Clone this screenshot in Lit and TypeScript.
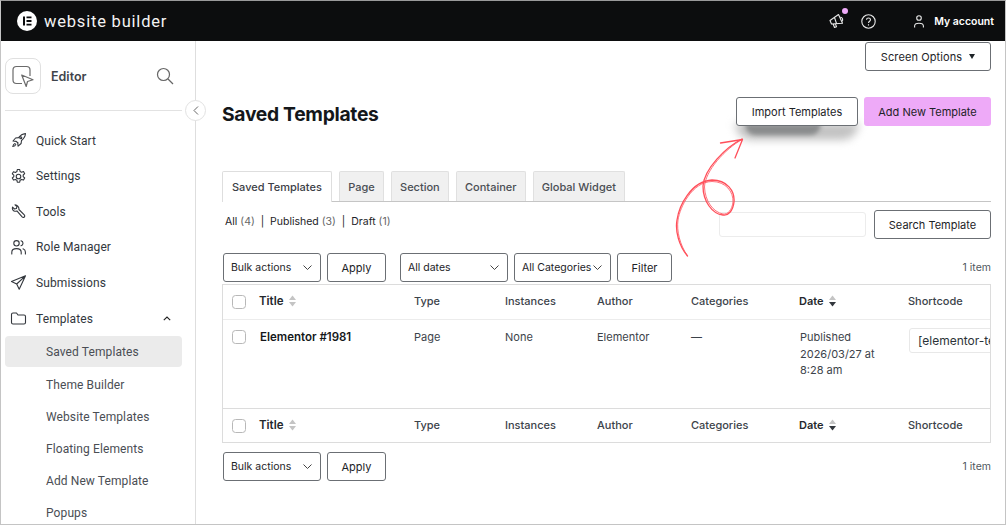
import { LitElement, html, css, svg } from 'lit';
import { customElement } from 'lit/decorators.js';

const navItems = [
  { label: 'Quick Start', icon: svg`<path d="M6.2 9.4 3 9l2.6-3 3-.4C10.500 3 13 1.800 15.500 1.500c-.2 2.600-1.400 5-4 7l-.4 3-3 2.600-.4-3.200zM6.200 9.400l1.900 1.500M5 11.500c-1.300.4-2 1.800-2.200 3 1.300-.2 2.600-.9 3-2.200"/><circle cx="10.800" cy="5.700" r="1"/>` },
  { label: 'Settings', icon: svg`<circle cx="8.500" cy="8.500" r="2.300"/><path d="M7.300 1.500h2.400l.4 2 1.500.8 1.900-.7 1.200 2.100-1.500 1.300v1.700l1.500 1.300-1.200 2.100-1.900-.7-1.500.8-.4 2H7.300l-.4-2-1.500-.8-1.900.7-1.200-2.100 1.500-1.300V7.100L2.300 5.800l1.200-2.100 1.900.7 1.500-.8z"/>` },
  { label: 'Tools', icon: svg`<path d="M5 1.800 7 3.600 6.400 5.500l-1.900.5-2-1.900C2 6 2.800 7.900 4.800 8.200c.9.100 1.500 0 2.100-.3l5.200 6c.7.700 1.600.7 2.200.1.600-.6.600-1.500 0-2.100L8.900 6.500c.4-2.300-1.500-4.700-3.900-4.700z"/>` },
  { label: 'Role Manager', icon: svg`<circle cx="6.500" cy="4.300" r="2.700"/><path d="M1.800 15v-1.800c0-2.200 1.800-3.600 4.700-3.600s4.700 1.400 4.700 3.600V15M11 1.800c1.300.4 2 1.300 2 2.500s-.7 2.100-2 2.500M13 9.800c1.500.5 2.400 1.600 2.400 3.200v2"/>` },
  { label: 'Submissions', icon: svg`<path d="M15.500 1.800 1.500 7.600l5.200 2.400 2.500 5.200zM15.500 1.800 6.700 10"/>` },
];

const subItems = ['Saved Templates', 'Theme Builder', 'Website Templates', 'Floating Elements', 'Add New Template', 'Popups'];
const tabs = ['Saved Templates', 'Page', 'Section', 'Container', 'Global Widget'];
const columns = ['Type', 'Instances', 'Author', 'Categories'];

@customElement('app-root')
export class AppRoot extends LitElement {
  static styles = css`
    :host {
      display: block;
      width: 1006px;
      height: 525px;
      overflow: hidden;
      font-family: Inter, 'Liberation Sans', sans-serif;
      color: #1d2327;
    }
    * { box-sizing: border-box; }
    .frame {
      position: relative;
      width: 1006px;
      height: 525px;
      overflow: hidden;
      display: flex;
      flex-direction: column;
      background: #fff;
      border: 1px solid #c4c4c4;
      border-top: 1px solid #9a9a9a;
    }
    .topbar {
      flex: none;
      height: 40px;
      background: #0c0d0e;
      color: #fff;
      display: flex;
      align-items: center;
      padding: 0 11px 0 16px;
    }
    .logo {
      width: 20px;
      height: 20px;
      flex: none;
    }
    .brand {
      margin-left: 7px;
      font-family: Roboto, sans-serif;
      font-size: 16.500px;
      letter-spacing: 0.8px;
      color: #f3f3f3;
    }
    .spacer { flex: 1; }
    .top-icon {
      position: relative;
      display: flex;
      color: #e8e8e8;
    }
    .dot {
      position: absolute;
      top: -5px;
      right: -3px;
      width: 6px;
      height: 6px;
      border-radius: 50%;
      background: #eeaaf8;
    }
    .help { margin-left: 16px; }
    .account-icon { margin-left: 38.500px; }
    .account {
      margin-left: 10px;
      font-size: 10.500px;
      font-weight: 600;
    }
    .body {
      flex: 1;
      min-height: 0;
      display: flex;
    }
    .side {
      position: relative;
      flex: none;
      width: 195px;
      border-right: 1px solid #dedede;
      padding: 0 13px 0 4px;
      color: #3f444b;
    }
    .editor {
      display: flex;
      align-items: center;
      height: 70px;
      padding-top: 1px;
      border-bottom: 1px solid #e2e2e2;
    }
    .editor-box {
      width: 36px;
      height: 36px;
      border: 1px solid #e0e0e0;
      border-radius: 8px;
      display: flex;
      align-items: center;
      justify-content: center;
    }
    .editor-name {
      margin-left: 10px;
      font-size: 12.500px;
      font-weight: 600;
      flex: 1;
    }
    .editor-search { margin-right: 8px; display: flex; }
    .collapse {
      position: absolute;
      left: 184px;
      top: 59px;
      width: 21px;
      height: 21px;
      border-radius: 50%;
      border: 1px solid #e2e2e2;
      background: #fff;
      display: flex;
      align-items: center;
      justify-content: center;
      z-index: 1;
    }
    .nav { padding-top: 11.800px; }
    .nav-item {
      display: flex;
      align-items: center;
      height: 35.600px;
      font-family: Roboto, sans-serif;
      font-size: 12px;
      letter-spacing: 0.1px;
      color: #33373d;
    }
    .nav-icon {
      width: 17px;
      height: 17px;
      margin: 0 9px 0 5px;
      fill: none;
      stroke: #33373d;
      stroke-width: 1.100;
      stroke-linejoin: round;
      stroke-linecap: round;
    }
    .chev { margin-left: auto; margin-right: 11px; }
    .sub-item {
      display: flex;
      align-items: center;
      height: 32.200px;
      padding-left: 41px;
      font-family: Roboto, sans-serif;
      font-size: 12px;
      letter-spacing: 0.1px;
      color: #4a4e54;
      border-radius: 4px;
    }
    .sub-item.active {
      background: #ebebeb;
      height: 31px;
      margin-bottom: 1.200px;
    }
    .main {
      position: relative;
      flex: 1;
      min-width: 0;
      padding: 0 14px 0 26px;
      font-size: 11px;
    }
    .screen-row {
      display: flex;
      justify-content: flex-end;
      height: 55px;
      padding-top: 1px;
    }
    .btn {
      display: flex;
      align-items: center;
      justify-content: center;
      height: 29px;
      background: #fff;
      border: 1px solid #6b6f74;
      border-radius: 3px;
      font-size: 11px;
      color: #1d2327;
      white-space: nowrap;
    }
    .screen { width: 126px; gap: 7px; letter-spacing: 0.100px; }
    .caret {
      width: 0;
      height: 0;
      border: 3.500px solid transparent;
      border-top: 5px solid #1d2327;
      border-bottom: 0;
    }
    .title-row {
      display: flex;
      align-items: center;
      height: 30px;
      padding-top: 1px;
    }
    h1 {
      margin: 0;
      padding-top: 4px;
      flex: 1;
      font-size: 19.300px;
      font-weight: 700;
      letter-spacing: -0.300px;
      color: #14171a;
    }
    .import {
      position: relative;
      width: 122px;
      margin-right: 6px;
    }
    .import::before {
      content: '';
      position: absolute;
      left: -2px;
      right: -2px;
      top: 25px;
      height: 17px;
      background: #c2c2c2;
      filter: blur(4px);
      border-radius: 0 0 20px 20px;
      z-index: -2;
    }
    .import::after {
      content: '';
      position: absolute;
      left: 8px;
      width: 76px;
      top: 26px;
      height: 11px;
      background: #8a8c8d;
      filter: blur(2px);
      border-radius: 0 0 30px 30px;
      z-index: -1;
    }
    .import-wrap { position: relative; z-index: 0; }
    .add {
      width: 127px;
      border: 0;
      background: #eeaaf8;
    }
    .tabs {
      display: flex;
      gap: 7.300px;
      margin-top: 45px;
      height: 31px;
      border-bottom: 1px solid #c5c5c5;
    }
    .tab {
      display: flex;
      align-items: center;
      justify-content: center;
      padding: 1px 8px 0;
      height: 30px;
      background: #f0f0f0;
      border: 1px solid #e0e0e0;
      border-bottom: 0;
      border-radius: 2px 2px 0 0;
      font-size: 11px;
      font-weight: 500;
      color: #4a4e54;
    }
    .tab.active {
      background: #fff;
      height: 31px;
      padding: 0 9px;
      border-color: #dedede;
      color: #3c4046;
    }
    .tools {
      display: flex;
      align-items: flex-start;
      height: 40px;
    }
    .links {
      flex: 1;
      padding: 13px 0 0 3px;
      font-size: 10.500px;
      white-space: pre;
    }
    .links i { font-style: normal; color: #666; }
    .search-input {
      width: 147px;
      height: 25px;
      margin-top: 10px;
      border: 1px solid #ececec;
      border-radius: 3px;
      margin-right: 8px;
    }
    .search-btn { width: 117px; margin-top: 8px; }
    .filters {
      display: flex;
      align-items: center;
      margin-top: 11px;
      padding-left: 1px;
      height: 29px;
      gap: 6px;
    }
    .filters.bottom { margin-top: 9px; }
    .select {
      justify-content: space-between;
      padding: 0 7px;
      font-size: 10.500px;
      border-radius: 3px;
    }
    .select span { margin-top: -1px; }
    .count {
      margin-left: auto;
      font-size: 10.500px;
      color: #50575e;
    }
    .table {
      margin-top: 2px;
      border: 1px solid #dcdcdc;
      overflow: hidden;
    }
    .row {
      display: grid;
      grid-template-columns: 9px 27px 155px 91px 92px 94px 108px 109px 83px;
      align-items: center;
      font-size: 11px;
      color: #3c434a;
    }
    .head { height: 35px; padding-bottom: 2px; font-weight: 500; }
    .head.top { border-bottom: 1px solid #ececec; }
    .head.foot { border-top: 1px solid #dcdcdc; height: 34px; }
    .data {
      height: 88px;
      align-items: start;
      padding-top: 9px;
      line-height: 16.600px;
    }
    .check {
      grid-column: 2;
      width: 14px;
      height: 14px;
      margin-top: 2px;
      border: 1px solid #b8b8b8;
      border-radius: 3.500px;
    }
    .data .check { margin-top: 1px; }
    .title-cell {
      display: flex;
      align-items: center;
      gap: 5px;
      font-weight: 600;
      font-size: 11.500px;
      color: #24282d;
    }
    .data .name { padding-left: 1px; font-weight: 600; font-size: 11.500px; color: #14171a; }
    .sort-cell { display: flex; align-items: center; gap: 5px; font-weight: 600; color: #24282d; }
    .sort { display: flex; }
    .date { padding-left: 1px; }
    .shortcode {
      width: 90px;
      height: 25px;
      margin-top: -1px;
      margin-left: 1px;
      padding: 5px 0 0 8px;
      border: 1px solid #e8e8e8;
      border-radius: 3px;
      font-size: 12px;
      line-height: 14px;
      overflow: hidden;
      white-space: nowrap;
      color: #2c3338;
    }
    .arrow {
      position: absolute;
      left: 660px;
      top: 125px;
      fill: none;
      stroke: #ff4f5a;
      stroke-linecap: round;
      stroke-linejoin: round;
      z-index: 2;
      pointer-events: none;
    }
  `;

  private _sort(dark: boolean) {
    return html`<svg class="sort" width="7" height="12" viewBox="0 0 7 12">
      <path d="M3.500 .5 7 5H0z" fill="#c4c4c4" />
      <path d="M3.500 11.500 0 7h7z" fill=${dark ? '#33373d' : '#c4c4c4'} />
    </svg>`;
  }

  private _head(cls: string) {
    return html`
      <div class="row head ${cls}">
        <span class="check"></span>
        <span class="title-cell">Title ${this._sort(false)}</span>
        ${columns.map((c) => html`<span>${c}</span>`)}
        <span class="sort-cell">Date ${this._sort(true)}</span>
        <span>Shortcode</span>
      </div>
    `;
  }

  private _select(label: string, width: number) {
    return html`
      <div class="btn select" style="width:${width}px">
        <span>${label}</span>
        <svg width="11" height="7" viewBox="0 0 11 7" fill="none" stroke="#444" stroke-width="1">
          <path d="M1.500 1.500 5.500 5.500 9.500 1.500" />
        </svg>
      </div>
    `;
  }

  private _topbar() {
    return html`
      <header class="topbar">
        <svg class="logo" viewBox="0 0 20 20">
          <circle cx="10" cy="10" r="10" fill="#fff" />
          <path d="M6 5.500h2v9H6zM9.500 5.500H14.500v1.800h-5zM9.500 9.100H14.500v1.800h-5zM9.500 12.700H14.500v1.800h-5z" fill="#0c0d0e" />
        </svg>
        <span class="brand">website builder</span>
        <span class="spacer"></span>
        <span class="top-icon">
          <svg width="16" height="16" viewBox="0 0 16 16" fill="none" stroke="currentColor" stroke-width="1.100" stroke-linejoin="round">
            <path d="M9.500 1.500 1 7.500l1.500 3.500 11-.8zM4 10.800l1.500 3.700 2-.8-1.200-3.100M5.500 4.500l2 6M11.500 4.200c1.800-.2 3 3 1.500 4.200" />
          </svg>
          <span class="dot"></span>
        </span>
        <span class="top-icon help">
          <svg width="15" height="15" viewBox="0 0 15 15" fill="none" stroke="currentColor" stroke-width="1.100">
            <circle cx="7.500" cy="7.500" r="6.700" />
            <path d="M5.500 5.800C5.500 4.600 6.400 4 7.500 4s2 .7 2 1.800c0 1.500-2 1.500-2 3.200M7.500 10.200v1.200" />
          </svg>
        </span>
        <span class="top-icon account-icon">
          <svg width="10" height="13" viewBox="0 0 10 13" fill="none" stroke="currentColor" stroke-width="1.100">
            <circle cx="5" cy="3" r="2.300" />
            <path d="M.6 12.500V11c0-1.800 1.500-2.800 4.400-2.800S9.400 9.200 9.400 11v1.500" />
          </svg>
        </span>
        <span class="account">My account</span>
      </header>
    `;
  }

  private _sidebar() {
    return html`
      <aside class="side">
        <div class="editor">
          <div class="editor-box">
            <svg width="24" height="24" viewBox="0 0 24 24" fill="none" stroke="#6b6b6b" stroke-width="1.200" stroke-linejoin="round">
              <path d="M11 19.500H5.500a3.500 3.500 0 0 1-3.500-3.500V6A3.500 3.500 0 0 1 5.500 2.500h10A3.500 3.500 0 0 1 19 6v6" />
              <path d="M10.700 11 22 15.800l-5.500 1.700-1.300 5z" fill="#fff" />
            </svg>
          </div>
          <span class="editor-name">Editor</span>
          <span class="editor-search">
            <svg width="18" height="18" viewBox="0 0 18 18" fill="none" stroke="#666" stroke-width="1.200">
              <circle cx="7.500" cy="7.500" r="6" />
              <path d="M12 12l5 5" />
            </svg>
          </span>
        </div>
        <div class="collapse">
          <svg width="6" height="9" viewBox="0 0 6 9" fill="none" stroke="#666" stroke-width="1">
            <path d="M5 .5 1 4.500 5 8.500" />
          </svg>
        </div>
        <nav class="nav">
          ${navItems.map(
            (item) => html`
              <div class="nav-item">
                <svg class="nav-icon" viewBox="0 0 17 17">${item.icon}</svg>
                ${item.label}
              </div>
            `
          )}
          <div class="nav-item">
            <svg class="nav-icon" viewBox="0 0 17 17">
              <path d="M1.500 4.500c0-1 .6-1.500 1.500-1.500h3.500l1.500 2h6c1 0 1.500.6 1.500 1.500v6c0 1-.5 1.500-1.500 1.500H3c-.9 0-1.500-.5-1.500-1.500z" />
            </svg>
            Templates
            <svg class="chev" width="8" height="5" viewBox="0 0 8 5" fill="none" stroke="#222" stroke-width="1.100">
              <path d="M.8 4.200 4 1l3.200 3.200" />
            </svg>
          </div>
          ${subItems.map((s, i) => html`<div class="sub-item ${i === 0 ? 'active' : ''}">${s}</div>`)}
        </nav>
      </aside>
    `;
  }

  render() {
    return html`
      <div class="frame">
        ${this._topbar()}
        <div class="body">
          ${this._sidebar()}
          <main class="main">
            <div class="screen-row">
              <div class="btn screen">Screen Options <span class="caret"></span></div>
            </div>
            <div class="title-row">
              <h1>Saved Templates</h1>
              <div class="import-wrap"><div class="btn import">Import Templates</div></div>
              <div class="btn add">Add New Template</div>
            </div>
            <div class="tabs">
              ${tabs.map((t, i) => html`<div class="tab ${i === 0 ? 'active' : ''}">${t}</div>`)}
            </div>
            <div class="tools">
              <span class="links">All <i>(4)</i>  |  Published <i>(3)</i>  |  Draft <i>(1)</i></span>
              <span class="search-input"></span>
              <div class="btn search-btn">Search Template</div>
            </div>
            <div class="filters">
              ${this._select('Bulk actions', 98)}
              <div class="btn" style="width:59px">Apply</div>
              <span style="width:2px"></span>
              ${this._select('All dates', 108)}
              ${this._select('All Categories', 97)}
              <div class="btn" style="width:55px">Filter</div>
              <span class="count">1 item</span>
            </div>
            <div class="table">
              ${this._head('top')}
              <div class="row data">
                <span class="check"></span>
                <span class="name">Elementor #1981</span>
                <span>Page</span>
                <span>None</span>
                <span>Elementor</span>
                <span>—</span>
                <span class="date">Published<br />2026/03/27 at<br />8:28 am</span>
                <div class="shortcode">[elementor-template id="1981"]</div>
              </div>
              ${this._head('foot')}
            </div>
            <div class="filters bottom">
              ${this._select('Bulk actions', 98)}
              <div class="btn" style="width:59px">Apply</div>
              <span class="count">1 item</span>
            </div>
          </main>
        </div>
        <svg class="arrow" width="90" height="135" viewBox="660 125 90 135">
          <path stroke-width="1.300" d="M686.500 255C678 245 674 230 676 219C678 205 690 180 711 179C726 179 734 190 733 201C732 210 727 215 722 214C711 213 702 200 702 185C703 168 725 146 741 138" />
          <path stroke-width="0.800" d="M686 254C679 244 675.500 230 677 219C679 206 691 181 711 180.500C725 180.500 732.500 191 732 201C731 209 727 213.500 722 213C712 211 704 200 703.500 186C704 170 724 148 741 138.500" />
          <path stroke-width="1.300" d="M719.500 142 741.500 138.500 734 157" />
        </svg>
      </div>
    `;
  }
}
